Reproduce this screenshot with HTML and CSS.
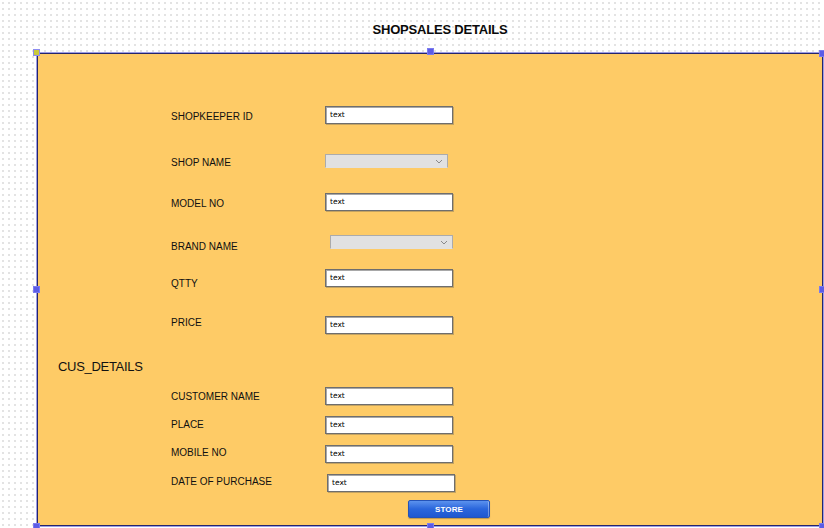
FILE: index.html
```html
<!DOCTYPE html>
<html>
<head>
<meta charset="utf-8">
<link rel="stylesheet" href="styles.css">
</head>
<body>
<header class="title-bar"><h1 class="title">SHOPSALES DETAILS</h1></header>
<main class="panel">
  <span class="handle handle-tl"></span>
  <span class="handle handle-tm"></span>
  <span class="handle handle-tr"></span>
  <span class="handle handle-ml"></span>
  <span class="handle handle-mr"></span>
  <span class="handle handle-bl"></span>
  <span class="handle handle-bm"></span>
  <span class="handle handle-br"></span>

  <label class="label l4">SHOPKEEPER ID</label>
  <div class="field"><span class="input">text</span></div>

  <label class="label l2">SHOP NAME</label>
  <div class="field"><span class="select"><svg class="chev" viewBox="0 0 8 5" width="8" height="5"><path d="M1 1l3 3 3-3" fill="none" stroke="#8a8a8a" stroke-width="1"/></svg></span></div>

  <label class="label l4">MODEL NO</label>
  <div class="field"><span class="input">text</span></div>

  <label class="label l5">BRAND NAME</label>
  <div class="field"><span class="select select-shift"><svg class="chev" viewBox="0 0 8 5" width="8" height="5"><path d="M1 1l3 3 3-3" fill="none" stroke="#8a8a8a" stroke-width="1"/></svg></span></div>

  <label class="label l8">QTTY</label>
  <div class="field"><span class="input">text</span></div>

  <label class="label l0">PRICE</label>
  <div class="field"><span class="input">text</span></div>

  <h2 class="section">CUS_DETAILS</h2>

  <label class="label l3">CUSTOMER NAME</label>
  <div class="field"><span class="input">text</span></div>

  <label class="label l2">PLACE</label>
  <div class="field"><span class="input">text</span></div>

  <label class="label l1">MOBILE NO</label>
  <div class="field"><span class="input">text</span></div>

  <label class="label l1">DATE OF PURCHASE</label>
  <div class="field"><span class="input input-shift">text</span></div>

  <div class="actions"><button class="store">STORE</button></div>
</main>
</body>
</html>
```

FILE: styles.css
```css
* { box-sizing: border-box; }

html, body {
  margin: 0;
  padding: 0;
  width: 824px;
  height: 528px;
  overflow: hidden;
}

body {
  font-family: "Liberation Sans", Arial, sans-serif;
  color: #111;
  background-color: #ffffff;
  background-image: radial-gradient(circle, #e2e2e2 0.7px, transparent 1.1px);
  background-size: 6px 6px;
  background-position: 0 0;
}

.title-bar {
  height: 53px;
  padding-top: 22px;
  padding-left: 56px;
  display: flex;
  justify-content: center;
}

.title {
  margin: 0;
  font-size: 13px;
  line-height: 15px;
  font-weight: bold;
  letter-spacing: -0.2px;
  color: #0a0a0a;
}

.panel {
  position: relative;
  margin-left: 37px;
  width: 786px;
  height: 473px;
  background: #fecb66;
  border: 1px solid #25256c;
  box-shadow: 0 0 0 1px rgba(90, 90, 210, 0.6);
  padding: 52px 0 0 20px;
  display: grid;
  grid-template-columns: 113px 154px 1fr;
  grid-template-rows: 48px 39px 42px 34px 47px 42px 29px 29px 29px 29px 26px auto;
  align-items: start;
}

.handle {
  position: absolute;
  width: 7px;
  height: 7px;
  background: #5c5ce6;
  border: 1px solid #7b7bef;
}
.handle-tl { left: -5px; top: -5px; background: #c9c93c; border-color: #8c8cf0; }
.handle-tm { left: 389px; top: -6px; }
.handle-tr { right: -3px; top: -4px; width: 6px; }
.handle-ml { left: -5px; top: 232px; }
.handle-mr { right: -3px; top: 232px; width: 6px; }
.handle-bl { left: -5px; bottom: -5px; }
.handle-bm { left: 389px; bottom: -5px; }
.handle-br { right: -3px; bottom: -5px; width: 6px; }

.label {
  grid-column: 2;
  font-size: 10px;
  line-height: 13px;
  color: #101010;
}
.l0 { margin-top: 0; }
.l1 { margin-top: 1px; }
.l2 { margin-top: 2px; }
.l3 { margin-top: 3px; }
.l4 { margin-top: 4px; }
.l5 { margin-top: 5px; }
.l8 { margin-top: 8px; }

.field { grid-column: 3; }

.input {
  display: block;
  width: 128px;
  height: 18px;
  background: #fff;
  border: 1px solid #6e6e6e;
  box-shadow: inset 1px 1px 0 #a8a8a8, 1px 1px 0 rgba(90, 90, 90, 0.35);
  padding: 2px 0 0 4px;
  font-family: "DejaVu Sans", sans-serif;
  font-size: 7.5px;
  line-height: 11px;
  color: #000;
}
.input-shift { margin-left: 2px; }

.select {
  display: flex;
  align-items: center;
  justify-content: flex-end;
  width: 123px;
  height: 14px;
  background: #e1e1e1;
  border: 1px solid #ababab;
  border-bottom-color: #e1e1e1;
  padding-right: 4px;
}
.select-shift { margin-left: 5px; }
.chev { display: block; }

.section {
  grid-column: 1 / -1;
  margin: 0;
  font-size: 13px;
  line-height: 17px;
  font-weight: normal;
  letter-spacing: -0.3px;
  color: #111;
}

.actions { grid-column: 3; }

.store {
  display: block;
  margin-left: 83px;
  width: 82px;
  height: 18px;
  padding: 0;
  border: 1px solid #2453b8;
  border-radius: 2px;
  background: linear-gradient(#5b92ee, #2a66dc 50%, #1f58d0);
  box-shadow: inset -1px 0 0 rgba(255, 255, 255, 0.35), 0 1px 1px rgba(0, 0, 0, 0.25);
  color: #fff;
  font-family: "Liberation Sans", Arial, sans-serif;
  font-size: 8px;
  font-weight: bold;
  letter-spacing: 0.1px;
}
```
